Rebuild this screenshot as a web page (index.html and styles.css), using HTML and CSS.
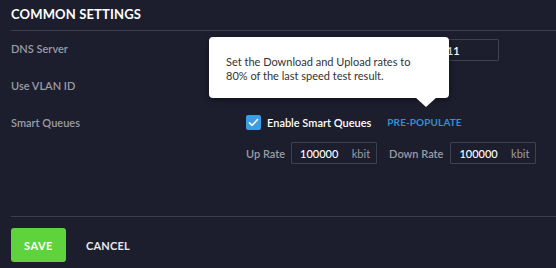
FILE: index.html
```html
<!DOCTYPE html>
<html lang="en">
<head>
    <meta charset="UTF-8">
    <meta name="viewport" content="width=device-width, initial-scale=1.0">
    <title>Common Settings</title>
    <link rel="stylesheet" href="styles.css">
</head>
<body>
    <div class="panel">
        <h2 class="panel-title">COMMON SETTINGS</h2>

        <div class="form-row row-dns">
            <div class="label">DNS Server</div>
            <div class="field">
                <div class="input input-dns">10.0.0.10, 8.8.8.8, 8.8.4.4, 192.168.100.11</div>
            </div>
        </div>

        <div class="form-row row-vlan">
            <div class="label">Use VLAN ID</div>
            <div class="field">
                <span class="checkbox off"></span>
            </div>
        </div>

        <div class="form-row row-queues">
            <div class="label">Smart Queues</div>
            <div class="field">
                <span class="checkbox">
                    <svg width="11" height="9" viewBox="0 0 11 9"><path d="M1.5 4.8 L4.2 7.3 L9.5 1.6" fill="none" stroke="#fff" stroke-width="1.6" stroke-linecap="round" stroke-linejoin="round"/></svg>
                </span>
                <span class="check-text">Enable Smart Queues</span>
                <a class="link" href="#">PRE-POPULATE</a>
            </div>
            <div class="tooltip">
                Set the Download and Upload rates to<br>
                80% of the last speed test result.
            </div>
        </div>

        <div class="form-row row-rates">
            <div class="label"></div>
            <div class="field">
                <span class="sub-label">Up Rate</span>
                <div class="input input-rate">
                    <span>100000</span>
                    <span class="unit">kbit</span>
                </div>
                <span class="sub-label down">Down Rate</span>
                <div class="input input-rate">
                    <span>100000</span>
                    <span class="unit">kbit</span>
                </div>
            </div>
        </div>

        <div class="actions">
            <button class="btn btn-save">SAVE</button>
            <button class="btn btn-cancel">CANCEL</button>
        </div>
    </div>
</body>
</html>
```

FILE: styles.css
```css
body {
    margin: 0;
    background-color: #1c1e2d;
    font-family: Lato, "Open Sans", sans-serif;
    color: #fff;
}
.panel {
    padding: 0 0 0 11px;
    height: 268px;
    box-sizing: border-box;
}
.panel-title {
    margin: 0;
    height: 30px;
    line-height: 29px;
    font-size: 13px;
    font-weight: 700;
    letter-spacing: 0.15px;
    border-bottom: 1px solid #3b3e4b;
}
.form-row {
    display: flex;
    align-items: center;
}
.row-dns {
    margin-top: 8px;
    height: 22px;
}
.row-vlan {
    margin-top: 15px;
    height: 18px;
}
.row-queues {
    position: relative;
    margin-top: 19px;
    height: 18px;
}
.row-rates {
    margin-top: 11px;
    height: 22px;
}
.label {
    width: 235px;
    flex-shrink: 0;
    font-size: 11px;
    font-weight: 600;
    color: #9a9ca5;
}
.row-dns .label {
    margin-top: -4px;
}
.field {
    display: flex;
    align-items: center;
}
.input {
    box-sizing: border-box;
    height: 22px;
    border: 1px solid #3f424e;
    border-radius: 1px;
    font-size: 11px;
    font-weight: 600;
    color: #fff;
    display: flex;
    align-items: center;
    padding: 0 7px;
}
.input-dns {
    width: 254px;
    margin-left: -1px;
    white-space: nowrap;
    overflow: hidden;
}
.checkbox {
    width: 15px;
    height: 15px;
    border-radius: 2px;
    background: #3c9ee2;
    display: inline-flex;
    align-items: center;
    justify-content: center;
}
.checkbox.off {
    background: transparent;
    border: 1px solid #3f424e;
    box-sizing: border-box;
}
.check-text {
    margin-left: 6px;
    font-size: 11px;
    font-weight: 600;
}
.link {
    margin-left: 16px;
    color: #3290d3;
    text-decoration: none;
    font-size: 10px;
    font-weight: 700;
    letter-spacing: 0.1px;
}
.tooltip {
    position: absolute;
    left: 198px;
    top: -76px;
    width: 240px;
    height: 61px;
    box-sizing: border-box;
    padding: 18px 0 0 17px;
    background: #fff;
    border-radius: 4px;
    box-shadow: 0 2px 6px rgba(0, 0, 0, 0.45);
    color: #333;
    font-size: 11px;
    line-height: 14px;
    font-weight: 400;
}
.tooltip::after {
    content: "";
    position: absolute;
    left: 206px;
    bottom: -9px;
    border-left: 11px solid transparent;
    border-right: 11px solid transparent;
    border-top: 10px solid #fff;
}
.sub-label {
    font-size: 11px;
    font-weight: 600;
    color: #9a9ca5;
    margin-right: 6px;
}
.sub-label.down {
    margin-left: 12px;
    margin-right: 7px;
}
.input-rate {
    width: 86px;
    justify-content: space-between;
    font-weight: 500;
    padding: 0 6px 0 8px;
}
.input-rate .unit {
    color: #9a9ca5;
    font-weight: 400;
}
.actions {
    margin-top: 52px;
    border-top: 1px solid #3b3e4b;
    padding-top: 11px;
    display: flex;
    align-items: center;
}
.btn {
    font-family: Lato, "Open Sans", sans-serif;
    font-size: 11px;
    font-weight: 700;
    letter-spacing: 0.5px;
    border: none;
    color: #fff;
    cursor: pointer;
}
.btn-save {
    width: 55px;
    height: 34px;
    border-radius: 3px;
    background: #5fd33b;
}
.btn-cancel {
    background: none;
    margin-left: 14px;
    padding: 0 6px;
    color: #e8e8ec;
    letter-spacing: 0.2px;
}
```
